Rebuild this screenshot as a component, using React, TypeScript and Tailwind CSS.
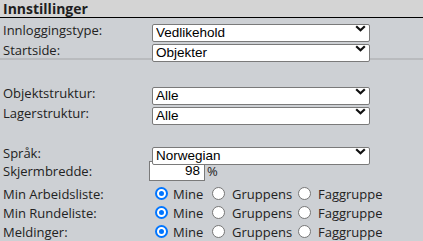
import React from "react";

const label = "text-[13px] leading-[18px] text-[#222] [font-family:'Open_Sans','Liberation_Sans',sans-serif]";

function Chevron() {
  return (
    <svg width="11" height="7" viewBox="0 0 11 7" className="pointer-events-none absolute right-[4px] top-[6px]">
      <path d="M1.2 1.2 L5.5 5.2 L9.8 1.2" fill="none" stroke="#111" strokeWidth="2.2" />
    </svg>
  );
}

function Select({ value }: { value: string }) {
  return (
    <div className="relative h-[18px] w-[218px]">
      <select
        defaultValue={value}
        className="h-[18px] w-full appearance-none rounded-[2px] border border-[#7a7a7a] bg-white pl-[3px] text-[13.5px] leading-none text-black outline-none [font-family:'Liberation_Sans',Arial,sans-serif]"
      >
        <option>{value}</option>
      </select>
      <Chevron />
    </div>
  );
}

function Radio({ checked }: { checked?: boolean }) {
  return checked ? (
    <span className="flex h-[13px] w-[13px] shrink-0 items-center justify-center rounded-full bg-[#0075ff]">
      <span className="h-[9px] w-[9px] rounded-full border-2 border-white bg-[#0075ff]" />
    </span>
  ) : (
    <span className="h-[13px] w-[13px] shrink-0 rounded-full border border-[#767676] bg-white" />
  );
}

function RadioRow({ name }: { name: string }) {
  return (
    <div className="flex h-[19px] items-center">
      <span className={`${label} w-[155px] shrink-0 pl-[3px]`}>{name}</span>
      <Radio checked />
      <span className={`${label} ml-[5px] w-[39px] shrink-0`}>Mine</span>
      <Radio />
      <span className={`${label} ml-[7px] w-[66px] shrink-0`}>Gruppens</span>
      <Radio />
      <span className={`${label} ml-[7px]`}>Faggruppe</span>
    </div>
  );
}

function Row({ name, w = "w-[152px]", children }: { name: string; w?: string; children: React.ReactNode }) {
  return (
    <div className="flex items-start">
      <span className={`${label} ${w} h-[18px] shrink-0 pl-[3px] pt-[2px]`}>{name}</span>
      {children}
    </div>
  );
}

export default function App() {
  return (
    <div className="h-[241px] w-[423px] overflow-hidden bg-[#cdd0d4]">
      <div className="flex h-[18px] items-center border-b border-black bg-[#d4d4d4] pl-[3px]">
        <span className="text-[14px] font-bold leading-none text-[#1e1e1e] [font-family:'Open_Sans','Liberation_Sans',sans-serif]">
          Innstillinger
        </span>
      </div>

      <div className="flex flex-col gap-[2px] pt-[1px]">
        <Row name="Innloggingstype:">
          <Select value="Vedlikehold" />
        </Row>
        <Row name="Startside:">
          <Select value="Objekter" />
        </Row>
      </div>

      <div className="mt-[1px] h-[2px] bg-[#b9bbbe]" />

      <div className="flex flex-col gap-[2px] pt-[22px]">
        <Row name="Objektstruktur:">
          <Select value="Alle" />
        </Row>
        <Row name="Lagerstruktur:">
          <Select value="Alle" />
        </Row>
      </div>

      <div className="flex flex-col pt-[22px]">
        <Row name="Språk:">
          <Select value="Norwegian" />
        </Row>
        <div className="mt-[1px] flex items-center">
          <span className={`${label} w-[149px] shrink-0 pl-[3px]`}>Skjermbredde:</span>
          <span className="flex h-[20px] w-[56px] items-center justify-end border border-[#7a7a7a] bg-white pr-[4px] text-[13.5px] leading-none text-black [font-family:'Liberation_Sans',Arial,sans-serif]">
            98
          </span>
          <span className={`${label} ml-[2px]`}>%</span>
        </div>
        <div className="mt-[3px]">
          <RadioRow name="Min Arbeidsliste:" />
          <RadioRow name="Min Rundeliste:" />
          <RadioRow name="Meldinger:" />
        </div>
      </div>
    </div>
  );
}
